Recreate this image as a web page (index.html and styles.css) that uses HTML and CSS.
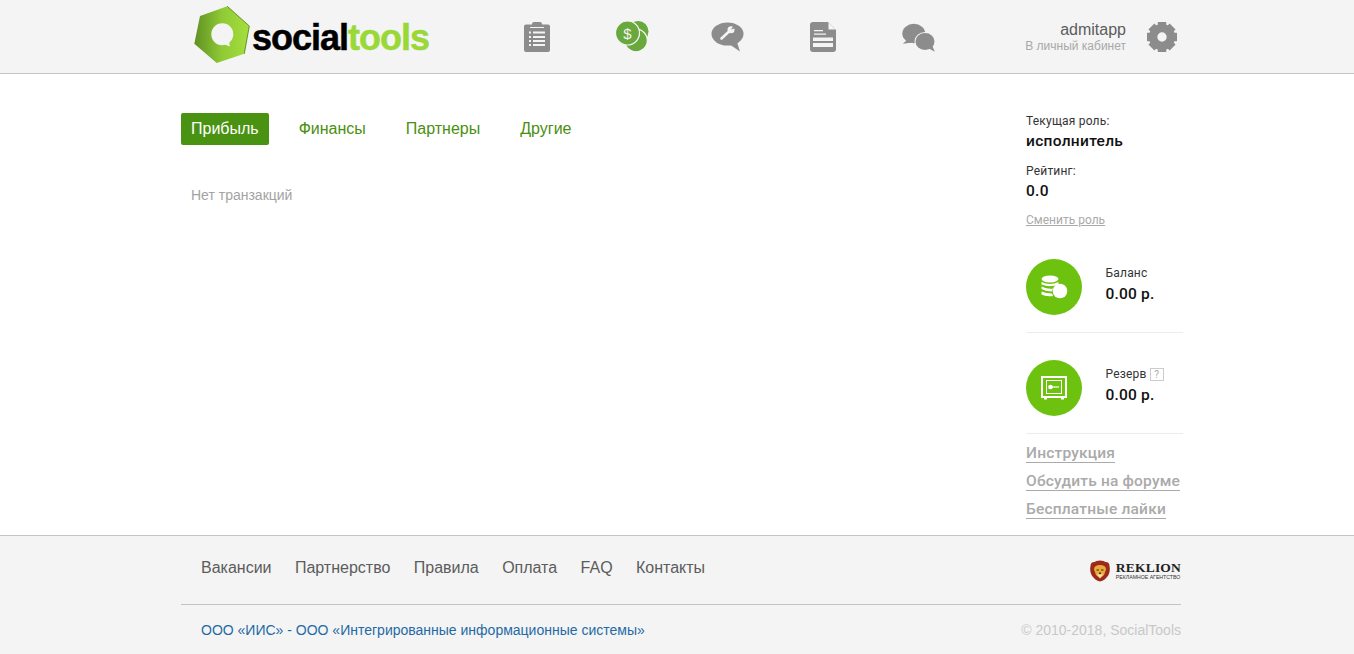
FILE: index.html
```html
<!DOCTYPE html>
<html lang="ru">
<head>
<meta charset="utf-8">
<title>SocialTools</title>
<link rel="stylesheet" href="styles.css">
</head>
<body>
<header class="header">
  <div class="wrap header-inner">
    <a class="logo" href="#">
      <svg class="logo-mark" width="56" height="58" viewBox="0 0 56 58">
        <defs><linearGradient id="hex" x1="0" x2="1" y1="0" y2="0"><stop offset="0" stop-color="#5f9022"/><stop offset="0.5" stop-color="#8fca36"/><stop offset="1" stop-color="#a6df3c"/></linearGradient></defs>
        <path d="M6 10 L33.300 0.300 L55.300 20 L50.300 47.700 L22.700 57 L0.300 37.700 Z" fill="url(#hex)"/>
        <path d="M33.300 0.300 L55.300 20 L50.300 47.700" fill="none" stroke="#4c7a18" stroke-width="0.800"/>
        <path d="M28.300 17.300 C34.500 17.300 39.300 22 39.300 28.300 C39.300 32 37.700 34.800 35.300 36.600 L35.800 40.600 L31.500 38.800 C30.500 39.100 29.400 39.300 28.300 39.300 C22.200 39.300 17.300 34.400 17.300 28.300 C17.300 22.200 22.200 17.300 28.300 17.300 Z" fill="#f4f4f4"/>
      </svg>
      <span class="logo-text">social<span class="logo-green">tools</span></span>
    </a>
    <nav class="top-nav">
      <a class="top-icon" href="#"><svg width="26" height="30" viewBox="0 0 26 30"><path d="M2 2.500 H8 V2 Q8 0 10 0 H16 Q18 0 18 2 V2.500 H24 Q26 2.500 26 4.500 V28 Q26 30 24 30 H2 Q0 30 0 28 V4.500 Q0 2.500 2 2.500 Z" fill="#8c8c8c"/><path d="M5 9.500h2v2H5zM9 9.500h12v2H9zM5 14h2v2H5zM9 14h12v2H9zM5 18h2v2H5zM9 18h12v2H9zM5 22h2v2H5zM9 22h12v2H9z" fill="#f4f4f4"/><path d="M6 5.500H20" stroke="#f4f4f4"/></svg></a>
      <a class="top-icon top-icon-money" href="#"><svg width="33" height="32" viewBox="0 0 33 32"><circle cx="22" cy="11.500" r="10.500" fill="#69a83c"/><circle cx="20" cy="20.500" r="11.300" fill="#69a83c" stroke="#f4f4f4" stroke-width="1.200"/><circle cx="11.500" cy="13" r="12" fill="#69a83c" stroke="#f4f4f4" stroke-width="1.200"/><text class="dollar" x="11.500" y="18.500">$</text></svg></a>
      <a class="top-icon" href="#"><svg width="33" height="30" viewBox="0 0 33 30"><ellipse cx="16.500" cy="12" rx="16" ry="11.500" fill="#8c8c8c"/><path d="M18 22 L29 29.500 L26 20 Z" fill="#8c8c8c"/><path d="M10.500 16.500 L18 9.500" stroke="#f4f4f4" stroke-width="2.600" stroke-linecap="round"/><circle cx="20" cy="7.700" r="3.500" fill="#f4f4f4"/><path d="M20 7.500 L23 3 L25 6 Z" fill="#8c8c8c"/></svg></a>
      <a class="top-icon" href="#"><svg width="26" height="30" viewBox="0 0 26 30"><path d="M3 0 H18 L26 8 V27 Q26 30 23 30 H3 Q0 30 0 27 V3 Q0 0 3 0 Z" fill="#8c8c8c"/><path d="M18.500 0.500 L25.500 7.500 H18.500 Z" fill="#f4f4f4"/><path d="M4 8h9v1.200H4zM4 11.500h12v1.200H4zM3 15.500h20v3.500H3zM3 21h20v4H3z" fill="#f4f4f4"/></svg></a>
      <a class="top-icon" href="#"><svg width="33" height="30" viewBox="0 0 33 30"><ellipse cx="11.800" cy="11.500" rx="11.500" ry="9.700" fill="#8c8c8c"/><path d="M5 18 L0.800 21.800 L11 20.500 Z" fill="#8c8c8c"/><ellipse cx="23" cy="19.500" rx="10.500" ry="9.500" fill="#f4f4f4"/><ellipse cx="23" cy="19.500" rx="9.500" ry="8.500" fill="#8c8c8c"/><path d="M26 26 L32.800 29.800 L30 23 Z" fill="#8c8c8c"/></svg></a>
    </nav>
    <div class="account">
      <div class="account-text">
        <a class="account-name" href="#">admitapp</a>
        <a class="account-link" href="#">В личный кабинет</a>
      </div>
      <svg class="gear" width="30" height="30" viewBox="0 0 32 32"><circle cx="16" cy="16" r="9.500" fill="none" stroke="#8c8c8c" stroke-width="9"/><g fill="#8c8c8c"><rect x="11.500" y="0" width="9" height="6"/><rect x="11.500" y="26" width="9" height="6"/><rect x="0" y="11.500" width="6" height="9"/><rect x="26" y="11.500" width="6" height="9"/><rect x="11.500" y="0" width="9" height="6" transform="rotate(45 16 16)"/><rect x="11.500" y="26" width="9" height="6" transform="rotate(45 16 16)"/><rect x="0" y="11.500" width="6" height="9" transform="rotate(45 16 16)"/><rect x="26" y="11.500" width="6" height="9" transform="rotate(45 16 16)"/></g></svg>
    </div>
  </div>
</header>

<main class="wrap main">
  <section class="content">
    <nav class="tabs">
      <a class="tab tab-active" href="#">Прибыль</a>
      <a class="tab" href="#">Финансы</a>
      <a class="tab" href="#">Партнеры</a>
      <a class="tab" href="#">Другие</a>
    </nav>
    <p class="empty">Нет транзакций</p>
  </section>
  <aside class="sidebar">
    <div class="label">Текущая роль:</div>
    <div class="role">исполнитель</div>
    <div class="label label-rating">Рейтинг:</div>
    <div class="rating">0.0</div>
    <a class="change-role" href="#">Сменить роль</a>
    <div class="money money-balance">
      <span class="circle"><svg width="28" height="28" viewBox="0 0 28 28"><g fill="#fff"><ellipse cx="10" cy="6" rx="8.500" ry="3.500"/><path d="M1.500 9 Q10 13 18.500 9 V11.500 Q10 15 1.500 11.500 Z"/><path d="M1.500 13.500 Q8 16.500 13 15.500 L12 18.500 Q6 18.500 1.500 16 Z"/><path d="M1.500 18.500 Q6 20.500 12 20.500 L13 23 Q6 24 1.500 21.500 Z"/><circle cx="20" cy="18" r="7.300"/></g></svg></span>
      <div class="money-text">
        <div class="money-label">Баланс</div>
        <div class="money-value">0.00 р.</div>
      </div>
    </div>
    <div class="money money-reserve">
      <span class="circle"><svg width="26" height="26" viewBox="0 0 26 26"><rect x="1" y="2" width="24" height="20" fill="none" stroke="#fff" stroke-width="2"/><rect x="5.500" y="5.500" width="15" height="13" fill="none" stroke="#fff"/><circle cx="9.500" cy="12" r="2.300" fill="#fff"/><path d="M11 11.400h7v1.200h-7z" fill="#fff"/><path d="M3 22h3v2.500H3zM20 22h3v2.500h-3z" fill="#fff"/></svg></span>
      <div class="money-text">
        <div class="money-label">Резерв <span class="hint">?</span></div>
        <div class="money-value">0.00 р.</div>
      </div>
    </div>
    <div class="side-links">
      <a href="#">Инструкция</a>
      <a href="#">Обсудить на форуме</a>
      <a href="#">Бесплатные лайки</a>
    </div>
  </aside>
</main>

<footer class="footer">
  <div class="wrap">
    <div class="footer-top">
      <nav class="footer-nav">
        <a href="#">Вакансии</a>
        <a href="#">Партнерство</a>
        <a href="#">Правила</a>
        <a href="#">Оплата</a>
        <a href="#">FAQ</a>
        <a href="#">Контакты</a>
      </nav>
      <a class="reklion" href="#">
        <svg width="20" height="22" viewBox="0 0 20 22"><path d="M10 0.500 Q14 0.500 15.500 2 Q19.500 2 19.500 6 Q20.500 11 18.500 15 Q15 20.500 10 21.500 Q5 20.500 1.500 15 Q-0.500 11 0.500 6 Q0.500 2 4.500 2 Q6 0.500 10 0.500 Z" fill="#9c2b1b"/><path d="M10 5 Q16 5 16 9.500 L14 15 L10 18.500 L6 15 L4 9.500 Q4 5 10 5 Z" fill="#e9ab3c"/><path d="M7 14.500 H13 L10 18 Z" fill="#f6e6b8"/><path d="M6.500 9.500h2.500v1H6.500zM11 9.500h2.500v1H11zM9 12.500h2v1.500H9z" fill="#4a2a12"/></svg>
        <span class="reklion-text"><span class="reklion-name">REKLION</span><span class="reklion-sub">РЕКЛАМНОЕ АГЕНТСТВО</span></span>
      </a>
    </div>
    <div class="footer-bottom">
      <a class="company" href="#">ООО «ИИС» - ООО «Интегрированные информационные системы»</a>
      <span class="copyright">© 2010-2018, SocialTools</span>
    </div>
  </div>
</footer>
</body>
</html>
```
FILE: styles.css
```css
* { box-sizing: border-box; }
html, body { margin: 0; padding: 0; }
body { background: #fff; font-family: "Liberation Sans", Arial, sans-serif; color: #222; height: 654px; overflow: hidden; }
a { text-decoration: none; color: inherit; }
.wrap { width: 1000px; margin-left: 181px; }

.header { height: 74px; background: #f4f4f4; border-bottom: 1px solid #c4c4c4; }
.header-inner { display: flex; align-items: center; height: 73px; width: 1002px; }
.logo { display: flex; align-items: center; width: 308.500px; padding-left: 13px; height: 73px; flex: none; }
.logo-mark { flex: none; margin-top: -3px; }
.logo-text { font-weight: 700; font-size: 36px; letter-spacing: -1px; color: #000; margin-left: 2px; margin-top: 3px; -webkit-text-stroke: 0.500px currentColor; }
.logo-green { color: #9ad838; }
.top-nav { display: flex; flex: none; }
.top-icon { width: 95.250px; height: 73px; display: flex; align-items: center; justify-content: center; }
.top-icon svg { margin-top: 1px; }
.top-icon-money svg { margin-top: -1px; }
.dollar { font: 15px "Liberation Sans", sans-serif; fill: #f4f4f4; text-anchor: middle; }
.account { display: flex; flex: 1; justify-content: flex-end; align-items: center; padding-right: 6px; }
.account-text { display: flex; flex-direction: column; align-items: flex-end; margin-right: 21px; padding-top: 2px; }
.account-name { font-size: 16px; line-height: 18px; color: #5c5c5c; }
.account-link { font-size: 12px; line-height: 15px; color: #a8a8a8; }
.gear { display: block; margin-top: 1px; }

.main { display: flex; height: 461px; width: 1002px; }
.content { flex: 1; padding-top: 39px; }
.tabs { display: flex; gap: 20px; }
.tab { font-size: 16px; line-height: 32px; height: 32px; padding: 0 10px; color: #4a8f10; border-radius: 2px; }
.tab-active { background: #4a9211; color: #fff; }
.empty { margin: 41px 0 0 10px; font-size: 14px; line-height: 18px; color: #a3a3a3; }

.sidebar { width: 157px; flex: none; padding-top: 40px; font-family: Roboto, sans-serif; }
.label { font-size: 12px; line-height: 14px; color: #333; letter-spacing: 0.200px; }
.role { font-size: 15.500px; line-height: 18px; font-weight: 500; color: #111; margin-top: 4px; letter-spacing: 0.300px; }
.label-rating { margin-top: 14px; }
.rating { font-size: 15.500px; line-height: 18px; font-weight: 500; color: #111; margin-top: 4px; letter-spacing: 0.300px; }
.change-role { display: inline-block; font-size: 12px; line-height: 14px; color: #aaa; text-decoration: underline; margin-top: 13px; }
.money { display: flex; align-items: center; }
.money-balance { margin-top: 31px; padding-bottom: 17px; border-bottom: 1px solid #ececec; }
.money-reserve { margin-top: 27px; padding-bottom: 17px; border-bottom: 1px solid #ececec; }
.circle { width: 56px; height: 56px; border-radius: 50%; background: #6cc20e; display: flex; align-items: center; justify-content: center; flex: none; }
.money-text { margin-left: 23.500px; padding-bottom: 6px; }
.money-label { font-size: 12px; line-height: 16px; color: #333; letter-spacing: 0.200px; }
.money-value { font-size: 15.500px; line-height: 18px; font-weight: 500; color: #111; margin-top: 4px; letter-spacing: 0.200px; }
.hint { display: inline-block; width: 14px; height: 13px; line-height: 11px; border: 1px solid #ccc; color: #aaa; font-size: 10px; text-align: center; vertical-align: 0; margin-left: 0; }
.side-links { display: flex; flex-direction: column; align-items: flex-start; margin-top: 10px; gap: 9px; }
.side-links a { font-size: 15.500px; line-height: 18px; font-weight: 500; color: #aaa; border-bottom: 1px solid #aaa; letter-spacing: 0.200px; }

.footer { height: 119px; background: #f4f4f4; border-top: 1px solid #c4c4c4; }
.footer-top { display: flex; justify-content: space-between; align-items: center; height: 69px; border-bottom: 1px solid #c4c4c4; padding: 0 0 4px 20px; }
.footer-nav { display: flex; gap: 23.400px; }
.footer-nav a { font-size: 16px; color: #5c5c5c; }
.reklion { display: flex; align-items: center; margin-top: 5px; }
.reklion-text { display: flex; flex-direction: column; margin-left: 6px; }
.reklion-name { font-family: "Liberation Serif", serif; font-weight: 700; font-size: 13.500px; line-height: 12px; color: #222; letter-spacing: 0.200px; }
.reklion-sub { font-size: 5.200px; line-height: 6px; color: #333; }
.footer-bottom { display: flex; justify-content: space-between; align-items: center; height: 50px; padding-left: 20px; }
.company { font-size: 14px; color: #1f6aa5; }
.copyright { font-size: 14px; color: #c8c8c8; }
```
